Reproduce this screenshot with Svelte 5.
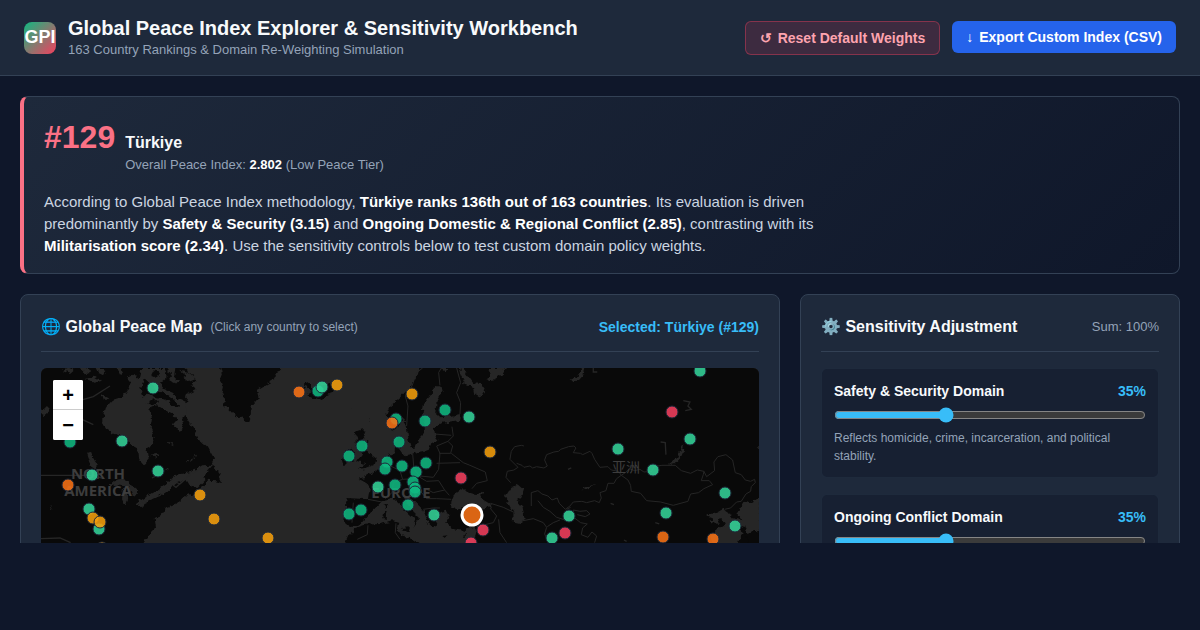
<script lang="ts">
  type Tier = 'very-high' | 'high' | 'medium' | 'low' | 'very-low';

  let domains = $state([
    {
      id: 'safety',
      name: 'Safety & Security Domain',
      weight: 35,
      note: 'Reflects homicide, crime, incarceration, and political stability.'
    },
    {
      id: 'conflict',
      name: 'Ongoing Conflict Domain',
      weight: 35,
      note: 'Reflects internal and external conflicts fought, and their intensity.'
    },
    {
      id: 'military',
      name: 'Militarisation Domain',
      weight: 30,
      note: 'Reflects military spending, weapons trade, and armed forces.'
    }
  ]);

  let sum = $derived(domains.reduce((total, d) => total + d.weight, 0));

  const defaults = [35, 35, 30];
  function reset() {
    domains.forEach((d, i) => (d.weight = defaults[i]));
  }

  // x, y on the map canvas
  const markers: [number, number, Tier][] = [
    [112, 20, 'high'], [81, 73, 'high'], [29, 74, 'very-high'], [51, 107, 'high'],
    [117, 103, 'high'], [27, 117, 'low'], [48, 141, 'high'], [58, 161, 'high'],
    [52, 150, 'medium'], [59, 154, 'medium'], [159, 127, 'medium'], [173, 151, 'medium'],
    [227, 170, 'medium'], [61, 180, 'medium'], [258, 24, 'low'], [277, 23, 'very-high'],
    [281, 19, 'high'], [296, 17, 'medium'], [371, 26, 'medium'], [355, 51, 'very-high'],
    [351, 55, 'low'], [384, 53, 'very-high'], [404, 42, 'very-high'], [428, 49, 'high'],
    [321, 78, 'very-high'], [308, 88, 'very-high'], [358, 74, 'very-high'], [449, 84, 'medium'],
    [346, 94, 'very-high'], [344, 101, 'very-high'], [361, 98, 'very-high'], [385, 95, 'very-high'],
    [375, 104, 'very-high'], [420, 110, 'very-low'], [372, 114, 'very-high'], [354, 117, 'very-high'],
    [337, 119, 'high'], [374, 120, 'very-high'], [374, 124, 'very-high'], [367, 137, 'very-high'],
    [393, 147, 'high'], [308, 146, 'very-high'], [320, 142, 'very-high'], [442, 162, 'very-low'],
    [430, 175, 'very-low'], [659, 3, 'high'], [631, 44, 'very-low'], [649, 71, 'high'],
    [577, 81, 'high'], [612, 102, 'high'], [684, 125, 'high'], [625, 145, 'high'],
    [694, 158, 'high'], [528, 148, 'high'], [524, 165, 'very-low'], [511, 170, 'high'],
    [622, 169, 'low'], [672, 171, 'low']
  ];
</script>

<div class="app">
  <header class="topbar">
    <div class="brand">
      <div class="logo">GPI</div>
      <div>
        <h1>Global Peace Index Explorer &amp; Sensitivity Workbench</h1>
        <p>163 Country Rankings &amp; Domain Re-Weighting Simulation</p>
      </div>
    </div>
    <div class="actions">
      <button class="btn btn-reset" onclick={reset}><span>↺</span> Reset Default Weights</button>
      <button class="btn btn-export"><span>↓</span> Export Custom Index (CSV)</button>
    </div>
  </header>

  <main>
    <section class="banner">
      <div class="banner-head">
        <span class="rank">#129</span>
        <div>
          <h2>Türkiye</h2>
          <p class="score">Overall Peace Index: <strong>2.802</strong> (Low Peace Tier)</p>
        </div>
      </div>
      <p class="summary">
        According to Global Peace Index methodology, <strong>Türkiye ranks 136th out of 163 countries</strong>.
        Its evaluation is driven predominantly by <strong>Safety &amp; Security (3.15)</strong> and
        <strong>Ongoing Domestic &amp; Regional Conflict (2.85)</strong>, contrasting with its
        <strong>Militarisation score (2.34)</strong>. Use the sensitivity controls below to test custom
        domain policy weights.
      </p>
    </section>

    <div class="grid">
      <section class="card">
        <div class="card-head">
          <h2>🌐 Global Peace Map <small>(Click any country to select)</small></h2>
          <span class="selected">Selected: Türkiye (#129)</span>
        </div>
        <div class="map">
          <svg viewBox="0 0 718 450" preserveAspectRatio="xMidYMin slice" role="img" aria-label="World peace map">
            <defs>
              <filter id="coast" x="0" y="0" width="100%" height="100%" color-interpolation-filters="sRGB">
                <feTurbulence type="fractalNoise" baseFrequency="0.2" numOctaves="2" seed="7" />
                <feDisplacementMap in="SourceGraphic" scale="6" xChannelSelector="R" yChannelSelector="G" />
              </filter>
            </defs>
            <rect class="sea" width="718" height="450" />
            <g filter="url(#coast)">
              <g transform="translate(-1 -2) scale(0.3333)">
                <!-- North America -->
                <path class="land" d="M-40-40H400L430 6 470 42 452 58 470 72 432 90 446 108 424 122 442 158 462 190 474 220 500 240 522 280 514 296 484 298 452 318 410 326 372 358 340 380 300 404 292 416 330 404 376 380 410 352 438 340 452 362 470 366 496 340 518 324 500 352 474 372 440 388 414 410 378 424 362 448 344 456 348 486 330 504 304 540H-40Z" />
                <path class="land" d="M516 300L540 318 536 332 546 352 528 346 500 344 490 330ZM436 372L470 362 482 368 452 388Z" />
                <path class="sea" d="M246 96L262 72 274 50 262 36 282 24 296 40 304 6H372L380 34 360 50 372 66 400 78 410 96 436 108 440 142 426 160 432 188 414 194 402 172 412 160 396 142 368 128 352 118 330 122 336 158 332 184 344 214 336 240 320 250 324 286 314 298 298 280 294 248 268 234 252 212 222 204 200 192 186 168 194 130 214 106Z" />
                <path class="land" d="M300 60L316 40 336 58 350 74 372 82 402 102 420 122 404 120 372 100 346 96 324 84 310 92ZM334 30L344 10 360 22 350 36ZM320 112L340 100 354 112 336 118Z" />
                <path class="sea" d="M380 6L396 28 384 42 404 54 414 44 402 32 406 6ZM420 14L440 30 430 36 446 48 466 40 444 20ZM120 6L134 22 150 18 142 6ZM170 6L180 26 196 18 190 6ZM230 6L240 26 252 18 246 6ZM3 132L20 122 32 134 14 150 3 148ZM66 14L88 6 104 12 90 24ZM134 42L164 32 186 44 164 50ZM96 84L110 76 116 84ZM186 88L202 96 192 106Z" />
                <path class="lake" d="M140 260L150 290 164 312 172 300 158 276 152 258M210 360L230 342 250 340 264 348 272 364 256 356 234 354ZM250 364L248 400 254 416 260 400 258 374ZM264 358L286 366 292 384 280 390 272 376ZM288 418L312 406 322 408 306 418ZM332 270L360 264 344 274M384 228L400 236M440 290L472 268M366 318L386 306M30 422L38 430M100 140L120 132" />
                <!-- Greenland -->
                <path class="land" d="M537-10L546 24 538 44 552 54 544 84 556 96 552 116 572 136 588 154 604 152 624 168 632 144 636 118 656 96 650 72 674 58 698 44 716 14 738-10Z" />
                <!-- Iceland, Britain and Ireland -->
                <path class="land" d="M796 46L812 56 820 70 840 60 872 50 880 68 866 88 834 102 812 94 802 86 816 78 800 70 792 58ZM942 198L968 190 978 204 964 222 982 232 974 248 994 266 1010 278 1004 296 978 306 954 308 976 292 952 284 966 266 958 248 944 236 952 220ZM914 256L934 248 946 262 940 286 910 294 906 280ZM936 126h3v3h-3ZM984 158h3v5h-3Z" />
                <!-- Eurasia -->
                <path class="land" d="M2200-40H1150L1128 34 1112 62 1082 92 1048 122 1040 142 1044 176 1056 194 1076 184 1088 158 1100 178 1104 210 1112 244 1128 240 1138 218 1152 204 1156 180 1146 156 1152 112 1176 78 1184 58 1204 58 1208 76 1190 108 1186 140 1202 154 1232 150 1264 144 1260 162 1208 170 1182 184 1186 210 1196 222 1172 236 1166 252 1124 260 1094 268 1080 248 1092 238 1084 212 1066 222 1064 258 1042 268 1032 290 1002 318 976 332 956 338 980 352 990 368 984 400 920 396 918 424 912 470 934 480 962 474 984 448 1006 426 1030 402 1058 396 1082 418 1104 442 1126 462 1118 484 1130 470 1140 456 1116 432 1092 398 1098 388 1126 408 1150 432 1164 468 1184 484 1192 464 1186 444 1218 434 1228 452 1216 470 1240 490 1272 494 1296 480 1310 492 1300 540H2200Z" />
                <path class="land" d="M912 540L926 508 946 486 976 476 1020 474 1060 466 1078 472 1070 492 1084 510 1118 520 1148 540ZM1082 486L1110 484 1106 498ZM1032 438L1042 436 1040 462 1030 460ZM1034 416L1042 414 1040 430ZM1204 510L1226 508 1212 516ZM1266 506L1284 502 1272 514Z" />
                <path class="sea" d="M1234 410L1246 382 1270 364 1290 384 1314 388 1334 370 1322 394 1352 412 1356 424 1320 428 1290 416 1252 430 1234 426ZM1396 392L1410 370 1434 356 1452 372 1444 396 1430 404 1448 426 1454 460 1440 474 1422 470 1420 440 1404 410Z" />
                <path class="sea" d="M1268 6L1284 30 1300 52 1322 54 1336 74 1324 94 1306 84 1302 64 1274 52 1262 28 1256 6ZM1346 6H1400L1388 24 1364 40 1340 44 1350 22ZM1206 6L1214 20 1222 6Z" />
                <path class="sea" d="M1628 6H1636L1630 28 1614 46 1590 42 1610 34ZM1884 296L1912 276 1928 238 1932 240 1926 268 1904 292ZM2160 394L2130 412 2116 404 2092 440 2104 462 2074 456 2064 440 2048 430 2030 440 2000 450 2022 458 2006 466 2030 474 2040 456 2058 472 2030 492 2010 512 2026 540H2094L2108 500 2090 474 2116 480 2124 506 2160 494ZM2150 244h10v8ZM1624 374L1640 360 1672 358 1644 364Z" />
                <path class="land" d="M2114 506L2140 498 2160 500V540H2130Z" />
              </g>
            </g>
            <!-- Rivers and borders -->
            <g transform="translate(-1 -2) scale(0.3333)">
              <path class="river" d="M290 414L360 388 392 352 408 364 452 324 496 300M3 328H160L190 338M3 518L60 516 92 530M336 336L356 326M110 106L160 92 210 60M390 340L420 354 438 338M126 160L160 176" />
              <path class="river" d="M1862 228L1876 230 1878 266M1930 104L1950 108 1944 120 1954 130 1936 134M1584 310L1594 306M1712 412L1722 416M1752 522L1760 526M1660 6L1660 18 1672 18M1846 470L1858 474" />
              <path class="border" d="M1100 180L1104 120 1096 90 1116 60 1130 20 1148 6M1200 58L1196 20 1204 6M1260 144L1262 110 1250 80 1262 50 1250 6M1118 262L1122 310 1140 330 1180 334 1196 310 1200 262 1190 240 1224 226 1238 240 1232 262 1198 262M1224 226L1240 210 1236 182M1184 204L1234 208M1234 262L1270 290 1290 298 1336 318 1342 344 1310 352 1296 368M1190 292L1260 290M1140 334L1160 346 1196 344 1214 372 1180 380 1160 370M1214 372L1228 388M1040 280L1052 300 1080 314 1088 340 1060 350 1056 380 1036 398M984 400L1026 408M940 410L936 470M1088 340L1130 338M1116 384L1140 374 1160 398 1190 398 1234 400M1150 430L1180 426 1200 426M984 478L982 506 952 520M1068 472L1066 500 1080 520M1350 426L1370 450 1360 470 1310 482M1376 460L1380 500 1400 530M1352 412L1390 424 1424 440" />
              <path class="border" d="M1412 350L1398 334 1402 316 1422 312 1434 304 1410 280 1414 256 1424 242 1444 238 1452 240M1430 292L1446 298 1452 304 1470 300 1478 306 1490 302 1512 306 1522 300 1514 282 1520 266 1542 258 1556 256 1562 250 1586 242 1602 240 1608 246 1600 260 1622 262 1628 266 1650 256 1656 262 1664 280 1680 304 1704 302 1714 312 1736 316 1744 328M1474 420L1474 380 1494 374 1506 384 1524 390 1536 402 1552 396 1558 412 1576 430 1590 420 1600 408 1626 406 1640 410 1664 404 1678 410 1684 396 1680 380 1698 374 1704 352 1722 352 1730 338 1744 328 1764 342 1772 358 1774 376 1802 382 1820 404 1862 408 1900 418 1944 406 1952 384 1976 380 1992 368 2018 356 2008 344 1984 344 1990 326 1992 316 1972 312 1952 322 1924 314 1906 298 1866 298 1842 302 1836 316 1812 318 1800 310 1784 314 1768 308 1756 320 1744 328M1992 316L2000 332 2024 314 2022 288 2034 272 2058 266 2078 282 2086 320 2104 326 2116 342 2132 346 2144 340 2146 350 2134 362 2132 376 2118 384 2104 406 2090 408 2072 426 2054 430" />
              <path class="border" d="M1440 466L1480 458 1510 470 1520 484 1514 504 1526 530M1494 404L1510 424 1530 436 1550 454 1576 462 1598 452 1600 432 1620 436 1640 434 1650 444 1636 452 1612 446M1580 430L1592 424M1604 456L1622 470 1642 474 1628 486 1624 506 1644 514 1656 498 1670 510 1664 530M1522 482L1540 470 1560 462" />
            </g>
            <g class="labels">
              <text x="57" y="111">NORTH</text>
              <text x="57" y="128">AMERICA</text>
              <text x="360" y="130">EUROPE</text>
              <text class="cjk" x="585" y="104">亚洲</text>
            </g>
            {#each markers as [x, y, tier]}
              <circle class="marker {tier}" cx={x} cy={y} r="6" />
            {/each}
            <circle class="marker active low" cx="431" cy="147" r="10" />
          </svg>
          <div class="zoom">
            <button aria-label="Zoom in">+</button>
            <button aria-label="Zoom out">−</button>
          </div>
        </div>
      </section>

      <section class="card">
        <div class="card-head">
          <h2>⚙️ Sensitivity Adjustment</h2>
          <span class="sum">Sum: {sum}%</span>
        </div>
        <div class="sliders">
          {#each domains as domain (domain.id)}
            <div class="slider">
              <div class="slider-head">
                <label for={domain.id}>{domain.name}</label>
                <span>{domain.weight}%</span>
              </div>
              <input id={domain.id} type="range" min="0" max="100" bind:value={domain.weight} />
              <p>{domain.note}</p>
            </div>
          {/each}
        </div>
      </section>
    </div>
  </main>
</div>

<style>
  :global(body) {
    background: #0f172a;
  }
  .app {
    display: flex;
    flex-direction: column;
    box-sizing: border-box;
    height: 100vh;
    padding-bottom: 87px;
    color: #f8fafc;
    font-family: 'Liberation Sans', Arial, sans-serif;
    line-height: 1.5;
  }
  h1,
  h2,
  p {
    margin: 0;
  }
  .topbar {
    display: flex;
    justify-content: space-between;
    align-items: center;
    padding: 16px 24px;
    background: #1e293b;
    border-bottom: 1px solid #334155;
  }
  .brand {
    display: flex;
    align-items: center;
    gap: 12px;
  }
  .logo {
    display: flex;
    align-items: center;
    justify-content: center;
    width: 32px;
    height: 32px;
    border-radius: 8px;
    background: linear-gradient(135deg, #10b981, #f43f5e);
    color: #fff;
    font-size: 18px;
    font-weight: 700;
  }
  .brand h1 {
    font-size: 20px;
    line-height: 25px;
  }
  .brand p {
    color: #94a3b8;
    font-size: 13px;
    line-height: 18px;
  }
  .actions {
    display: flex;
    align-items: flex-start;
    gap: 12px;
  }
  .btn {
    display: flex;
    align-items: center;
    gap: 6px;
    padding: 8px 14px;
    border: none;
    border-radius: 6px;
    font-family: inherit;
    font-size: 14px;
    font-weight: 700;
    line-height: 16px;
    cursor: pointer;
  }
  .btn-reset {
    background: rgba(244, 63, 94, 0.15);
    border: 1px solid rgba(244, 63, 94, 0.4);
    color: #fda4af;
  }
  .btn-export {
    background: #2563eb;
    color: #fff;
  }
  main {
    flex: 1;
    min-height: 0;
    padding: 20px 20px 0;
    overflow: hidden;
  }
  .banner {
    margin-bottom: 20px;
    padding: 16px 20px;
    border: 1px solid #334155;
    border-left: 4px solid #fb7185;
    border-radius: 8px;
    background: linear-gradient(135deg, #1e293b, #0f172a);
  }
  .banner-head {
    display: flex;
    align-items: baseline;
    gap: 10px;
    margin-bottom: 16px;
  }
  .rank {
    color: #fb7185;
    font-size: 32px;
    font-weight: 700;
  }
  h2 {
    font-size: 16px;
    line-height: 24px;
  }
  .score {
    color: #94a3b8;
    font-size: 13px;
    line-height: 20px;
  }
  .summary {
    max-width: 800px;
    color: #cbd5e1;
    font-size: 15px;
    line-height: 22px;
  }
  strong {
    color: #fff;
  }
  .grid {
    display: grid;
    grid-template-columns: 2fr 1fr;
    gap: 20px;
  }
  .card {
    padding: 20px;
    border: 1px solid #334155;
    border-radius: 8px;
    background: #1e293b;
  }
  .card-head {
    display: flex;
    justify-content: space-between;
    align-items: center;
    margin-bottom: 16px;
    padding-bottom: 12px;
    border-bottom: 1px solid #334155;
    line-height: 24px;
  }
  .card-head h2 {
    display: flex;
    align-items: center;
    gap: 8px;
  }
  .card-head small {
    color: #94a3b8;
    font-size: 12px;
    font-weight: 400;
  }
  .selected {
    color: #38bdf8;
    font-size: 14px;
    font-weight: 700;
  }
  .sum {
    color: #94a3b8;
    font-size: 13px;
  }
  .map {
    position: relative;
    height: 450px;
    border-radius: 6px;
    background: #262626;
    overflow: hidden;
  }
  .map svg {
    display: block;
    width: 100%;
    height: 100%;
  }
  .sea {
    fill: #262626;
  }
  .land {
    fill: #090909;
  }
  .lake {
    fill: #262626;
    stroke: #262626;
    stroke-width: 3;
  }
  .river,
  .border {
    fill: none;
    stroke: #262626;
    stroke-width: 4;
  }
  .border {
    stroke-width: 3;
  }
  .labels text {
    fill: #3d3d3d;
    font-family: 'Open Sans', sans-serif;
    font-size: 15px;
    font-weight: 700;
    text-anchor: middle;
  }
  .labels .cjk {
    font-family: 'Noto Sans CJK SC', sans-serif;
    font-size: 14px;
    font-weight: 400;
  }
  .marker {
    stroke: #1e293b;
    fill-opacity: 0.87;
    cursor: pointer;
  }
  .very-high {
    fill: #10b981;
  }
  .high {
    fill: #34d399;
  }
  .medium {
    fill: #f59e0b;
  }
  .low {
    fill: #f97316;
  }
  .very-low {
    fill: #f43f5e;
  }
  .marker.active {
    stroke: #fff;
    stroke-width: 3;
  }
  .zoom {
    position: absolute;
    top: 12px;
    left: 12px;
    border-radius: 2px;
    background: #fff;
    overflow: hidden;
  }
  .zoom button {
    display: block;
    width: 30px;
    height: 30px;
    padding: 0;
    border: none;
    background: #fff;
    color: #000;
    font-family: 'Liberation Sans', sans-serif;
    font-size: 20px;
    font-weight: 700;
    line-height: 30px;
    cursor: pointer;
  }
  .zoom button:first-child {
    border-bottom: 1px solid #ccc;
  }
  .sliders {
    display: flex;
    flex-direction: column;
    gap: 16px;
  }
  .slider {
    display: flex;
    flex-direction: column;
    gap: 6px;
    padding: 12px;
    border: 1px solid rgba(51, 65, 85, 0.3);
    border-radius: 6px;
    background: rgba(15, 23, 42, 0.5);
  }
  .slider-head {
    display: flex;
    justify-content: space-between;
    font-size: 14px;
    font-weight: 700;
    line-height: 20px;
  }
  .slider-head span {
    color: #38bdf8;
  }
  .slider input {
    width: 100%;
    height: 16px;
    margin: 0;
    accent-color: #38bdf8;
    color-scheme: dark;
    cursor: pointer;
  }
  .slider p {
    color: #94a3b8;
    font-size: 12px;
    line-height: 18px;
  }
</style>
